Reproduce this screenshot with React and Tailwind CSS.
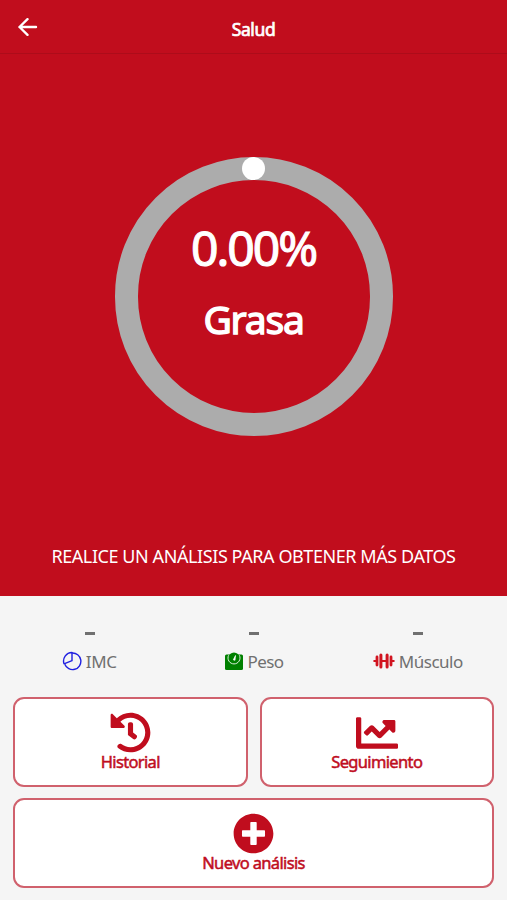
import { FaHistory, FaChartLine, FaPlusCircle } from "react-icons/fa";

function PieIcon() {
  return (
    <svg viewBox="0 0 20 20" className="-mt-[3px] h-5 w-5" fill="none" stroke="#2020e0" strokeWidth="1.4" strokeLinejoin="round">
      <path d="M10 1.5V9.7L2 12.8A8.6 8.6 0 0 1 10 1.5Z" />
      <path d="M10 2A8.3 8.3 0 1 1 2.8 13.2" />
    </svg>
  );
}

function ScaleIcon() {
  return (
    <svg viewBox="0 0 20 20" className="-mt-[3px] h-5 w-5">
      <path d="M2.5 3.5H17.5Q19 3.5 19 5V17.5Q19 19 17.5 19H2.5Q1 19 1 17.5V5Q1 3.5 2.5 3.5Z" fill="#008000" />
      <circle cx="10" cy="7" r="5.5" fill="#008000" />
      <path d="M4.6 4.3A6 6 0 1 0 15.4 4.3" fill="none" stroke="#dcefdc" strokeWidth="1" />
      <path d="M9.3 8.8 11.5 4.5 11 9.3Z" fill="#fff" stroke="#fff" strokeWidth=".7" />
    </svg>
  );
}

function BarbellIcon() {
  return (
    <svg viewBox="0 0 22 20" className="-mt-[2px] h-5 w-[22px]" fill="none" stroke="#d11420" strokeLinecap="round">
      <path d="M1.3 10H4M18 10H20.7M8 10H14" strokeWidth="2.2" />
      <path d="M4 6V14M18 6V14" strokeWidth="2.8" />
      <path d="M7.9 4V16M14.1 4V16" strokeWidth="3" />
    </svg>
  );
}

function Metric({ icon, label, labelClass }) {
  return (
    <div className="flex flex-1 flex-col items-center text-[#707070]">
      <div className="ml-[1px] mt-[36px] h-[3px] w-[10px] bg-[#707070]" />
      <div className="mt-[15px] flex h-6 items-center gap-[4px]">
        {icon}
        <span className={`text-[17px] leading-6 ${labelClass}`}>{label}</span>
      </div>
    </div>
  );
}

function ActionButton({ icon, label }) {
  return (
    <button className="flex h-[90px] flex-1 flex-col items-center rounded-[11px] border-2 border-[#d0616d] bg-white pt-[13px] text-[#c00d1e]">
      <span className="flex h-[41px] items-center">{icon}</span>
      <span className="-mt-[3px] text-[16.5px] leading-6 tracking-[-0.65px] [-webkit-text-stroke:0.5px]">{label}</span>
    </button>
  );
}

export default function App() {
  return (
    <div className="flex h-[900px] w-[507px] flex-col overflow-hidden bg-[#f5f5f5] font-['Noto_Sans','Open_Sans',sans-serif]">
      <header className="grid h-[54px] grid-cols-3 items-center border-b border-[#ad0c1a] bg-[#c10d1d] text-white">
        <svg viewBox="0 0 20 18" className="ml-[18px] h-[18px] w-5" fill="none" stroke="currentColor" strokeWidth="2.4" strokeLinecap="round" strokeLinejoin="round">
          <path d="M18 9H1.5M9.5 1.2 1.5 9l8 7.8" />
        </svg>
        <h1 className="mt-[4px] text-center text-[17.5px] font-normal leading-6 tracking-[-0.4px] [-webkit-text-stroke:0.7px]">Salud</h1>
      </header>
      <main className="flex h-[542px] flex-col items-center bg-[#c10d1d] pt-[103px] text-white">
        <div className="relative flex h-[279px] w-[278px] flex-col items-center rounded-full border-[23px] border-[#acacac] pt-[34px]">
          <span className="absolute -top-[23px] h-[23px] w-[23px] rounded-full bg-white" />
          <span className="text-[48px] leading-[68px] tracking-[-2px] [-webkit-text-stroke:1.1px]">0.00%</span>
          <span className="mt-[8px] text-[39px] leading-[58px] tracking-[-1.2px] [-webkit-text-stroke:1.4px]">Grasa</span>
        </div>
        <p className="mt-[108px] whitespace-nowrap text-[18px] leading-6 tracking-[-0.42px]">REALICE UN ANÁLISIS PARA OBTENER MÁS DATOS</p>
      </main>
      <section className="mx-[7px] flex h-[101px]">
        <Metric icon={<PieIcon />} label="IMC" labelClass="tracking-[-0.4px]" />
        <Metric icon={<ScaleIcon />} label="Peso" labelClass="tracking-[-0.6px]" />
        <Metric icon={<BarbellIcon />} label="Músculo" labelClass="tracking-[-0.5px]" />
      </section>
      <section className="flex flex-col gap-[11px] px-[13px]">
        <div className="flex gap-3">
          <ActionButton icon={<FaHistory size={41} />} label="Historial" />
          <ActionButton icon={<FaChartLine size={42} />} label="Seguimiento" />
        </div>
        <div className="flex">
          <ActionButton icon={<FaPlusCircle size={41} />} label="Nuevo análisis" />
        </div>
      </section>
    </div>
  );
}
